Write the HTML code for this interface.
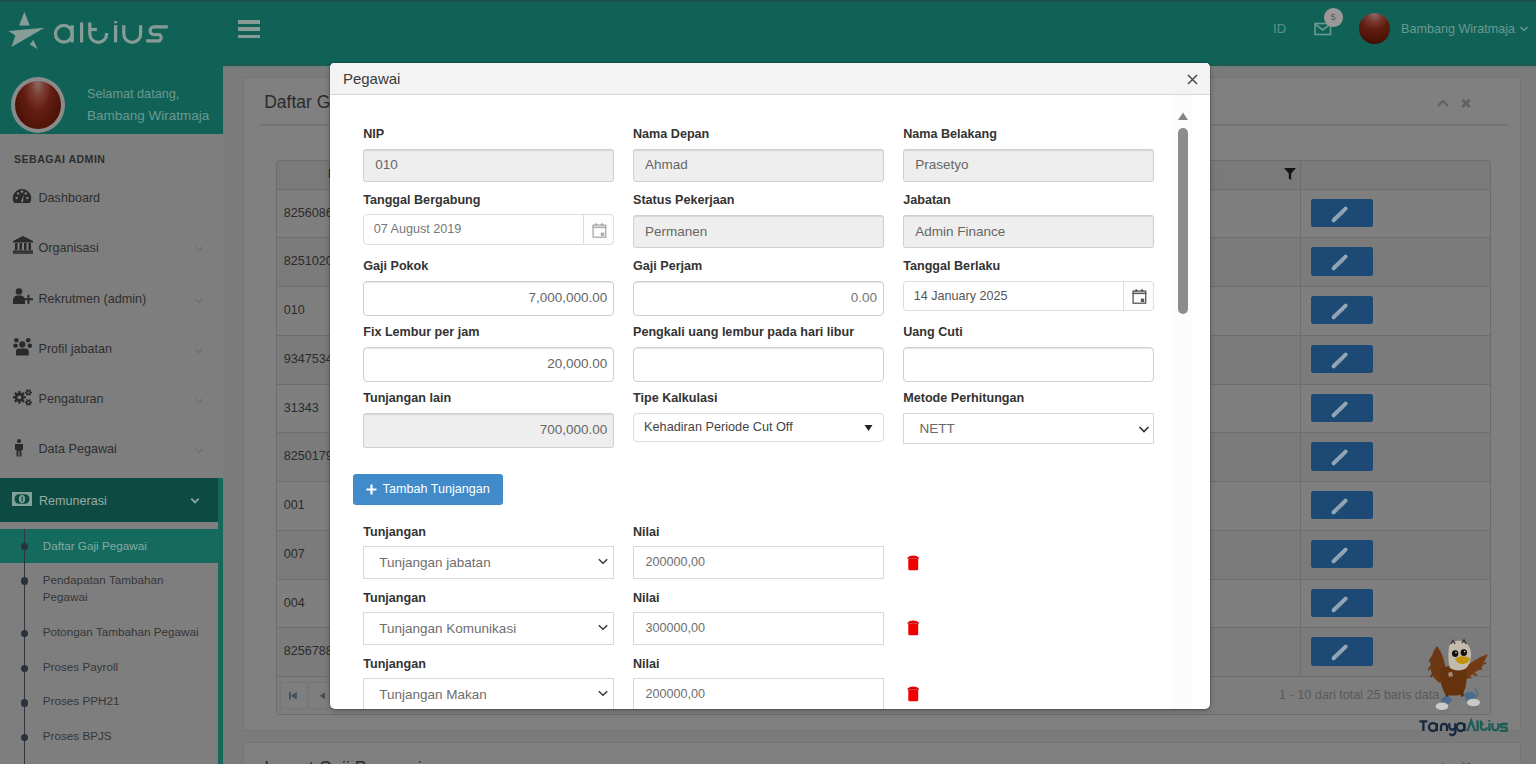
<!DOCTYPE html>
<html><head><meta charset="utf-8"><title>Pegawai</title>
<style>
html,body{margin:0;padding:0;width:1536px;height:764px;overflow:hidden;background:#7b7b7b}
body{position:relative;font-family:"Liberation Sans",sans-serif}
.t{position:absolute;white-space:nowrap;line-height:1}
.r{position:absolute}
#mclip{position:absolute;left:330px;top:62px;width:880px;height:647px;overflow:hidden;border-radius:5px}
</style></head><body>
<div class="r" style="left:0px;top:0px;width:1536px;height:764px;background:#7b7b7b"></div>
<div class="r" style="left:0px;top:0px;width:1536px;height:66px;background:#106256"></div>
<div class="r" style="left:0px;top:0px;width:1536px;height:1.3px;background:#155048"></div>
<div class="r" style="left:0px;top:1.3px;width:1536px;height:1.7px;background:#1b5a52"></div>
<div class="r" style="left:0px;top:66px;width:223px;height:698px;background:#7e7e7e"></div>
<div class="r" style="left:223px;top:64px;width:1313px;height:1.6px;background:#1c5a50"></div>
<div class="r" style="left:223px;top:65.6px;width:1313px;height:2.2px;background:#6c7f7b"></div>
<div class="r" style="left:0px;top:66px;width:223px;height:68px;background:#106256"></div>
<svg class="r" style="left:0;top:0" width="50" height="60" viewBox="0 0 50 60">
<g fill="#879c96">
<polygon points="24.4,11.8 19.1,25.4 29.7,25.4"/>
<polygon points="8.5,31 44.5,27.7 11.5,46.9 15.3,35.5"/>
<polygon points="33.3,40.1 29.7,44.2 37.7,49.2"/>
</g></svg>
<svg class="r" style="left:50px;top:15px" width="125" height="35" viewBox="0 0 125 35">
<g fill="none" stroke="#879c96" stroke-width="3.2" stroke-linecap="butt">
<circle cx="13.8" cy="18.8" r="8.4"/>
<line x1="22.2" y1="10.2" x2="22.2" y2="27.4"/>
<line x1="31.6" y1="7.4" x2="31.6" y2="27.4"/>
<path d="M39.8 7.4 V19 A8.4 8.4 0 0 0 56.6 19 V18"/>
<line x1="39.8" y1="14.5" x2="46.9" y2="14.5"/>
<line x1="65.6" y1="10.2" x2="65.6" y2="27.4"/>
<line x1="65.6" y1="6.2" x2="65.6" y2="8.2"/>
<path d="M73.8 10.2 V19 A8.4 8.4 0 0 0 90.6 19 V10.2"/>
<path d="M117.8 11.8 H104 A3.9 3.9 0 0 0 104 19.6 H109.6 A3.9 3.9 0 0 1 109.6 25.8 H96.2"/>
</g></svg>
<div class="r" style="left:238px;top:20px;width:22px;height:3.6px;background:#879c96"></div>
<div class="r" style="left:238px;top:27.4px;width:22px;height:3.6px;background:#879c96"></div>
<div class="r" style="left:238px;top:34.6px;width:22px;height:3.6px;background:#879c96"></div>
<div class="t" style="left:1273px;top:22.23px;font-size:13.2px;color:#5f9187;">ID</div>
<svg class="r" style="left:1313px;top:21px" width="20" height="16" viewBox="0 0 20 16">
<rect x="2" y="2.5" width="15.5" height="11" fill="none" stroke="#6b9990" stroke-width="1.6"/>
<path d="M2 3 L9.75 9 L17.5 3" fill="none" stroke="#6b9990" stroke-width="1.6"/></svg>
<div class="r" style="left:1324.2px;top:8.4px;width:18.6px;height:18.6px;border-radius:50%;background:#9d9898"></div>
<div class="t" style="left:1330.8px;top:12.95px;font-size:8.8px;color:#505050;">5</div>
<div class="r" style="left:1359px;top:13px;width:31px;height:31px;border-radius:50%;background:radial-gradient(circle at 50% 5%, #8a6a68 0%, #7a3a30 22%, #621c10 45%, #4e1408 75%, #360804 100%)"></div>
<div class="t" style="left:1401px;top:23.03px;font-size:12.6px;color:#6b9990;">Bambang Wiratmaja</div>
<svg class="r" style="left:1519px;top:25px" width="10" height="8" viewBox="0 0 10 8">
<path d="M1.5 2 L5 5.5 L8.5 2" fill="none" stroke="#6b9990" stroke-width="1.4"/></svg>
<div class="r" style="left:10.5px;top:77px;width:54px;height:56px;box-sizing:border-box;border-radius:50%;border:4px solid #8a8a8a;background:radial-gradient(ellipse at 50% 5%, #8a6a68 0%, #7a3a30 22%, #621c10 45%, #4e1408 75%, #360804 100%)"></div>
<div class="t" style="left:87px;top:88.15px;font-size:12.7px;color:#6b9990;">Selamat datang,</div>
<div class="t" style="left:87px;top:109.27px;font-size:13.5px;color:#6b9990;">Bambang Wiratmaja</div>
<div class="t" style="left:14px;top:153.63px;font-size:10.6px;color:#2e2e2e;font-weight:bold;letter-spacing:0.45px;">SEBAGAI ADMIN</div>
<div class="t" style="left:38.5px;top:191.73px;font-size:12.6px;color:#2e2e2e;">Dashboard</div>
<div class="t" style="left:38.5px;top:241.73px;font-size:12.6px;color:#2e2e2e;">Organisasi</div>
<svg class="r" style="left:194px;top:245.4px" width="10" height="8" viewBox="0 0 10 8">
<path d="M1.5 2 L5 5.5 L8.5 2" fill="none" stroke="#6f6f6f" stroke-width="1.3"/></svg>
<div class="t" style="left:38.5px;top:292.93px;font-size:12.6px;color:#2e2e2e;">Rekrutmen (admin)</div>
<svg class="r" style="left:194px;top:296.6px" width="10" height="8" viewBox="0 0 10 8">
<path d="M1.5 2 L5 5.5 L8.5 2" fill="none" stroke="#6f6f6f" stroke-width="1.3"/></svg>
<div class="t" style="left:38.5px;top:343.13px;font-size:12.6px;color:#2e2e2e;">Profil jabatan</div>
<svg class="r" style="left:194px;top:346.8px" width="10" height="8" viewBox="0 0 10 8">
<path d="M1.5 2 L5 5.5 L8.5 2" fill="none" stroke="#6f6f6f" stroke-width="1.3"/></svg>
<div class="t" style="left:38.5px;top:393.13px;font-size:12.6px;color:#2e2e2e;">Pengaturan</div>
<svg class="r" style="left:194px;top:396.8px" width="10" height="8" viewBox="0 0 10 8">
<path d="M1.5 2 L5 5.5 L8.5 2" fill="none" stroke="#6f6f6f" stroke-width="1.3"/></svg>
<div class="t" style="left:38.5px;top:443.33px;font-size:12.6px;color:#2e2e2e;">Data Pegawai</div>
<svg class="r" style="left:194px;top:447px" width="10" height="8" viewBox="0 0 10 8">
<path d="M1.5 2 L5 5.5 L8.5 2" fill="none" stroke="#6f6f6f" stroke-width="1.3"/></svg>
<svg class="r" style="left:12px;top:188px" width="20" height="16" viewBox="0 0 20 16">
<path d="M2.2 15 A9.2 9.2 0 1 1 17.8 15 Z" fill="#2a2a2a"/>
<g fill="#7e7e7e"><circle cx="4.6" cy="10" r="1.3"/><circle cx="6.2" cy="5.5" r="1.3"/><circle cx="10" cy="3.6" r="1.3"/><circle cx="13.8" cy="5.5" r="1.3"/><circle cx="15.4" cy="10" r="1.3"/>
<path d="M8.8 14 L11.6 6.5 L11.2 14 Z"/></g></svg>
<svg class="r" style="left:13px;top:236px" width="20" height="18" viewBox="0 0 20 18">
<g fill="#2a2a2a"><path d="M0 5 L10 0 L20 5 Z"/><rect x="0" y="5" width="20" height="1.5"/>
<rect x="2" y="7" width="2.5" height="7"/><rect x="6.5" y="7" width="2.5" height="7"/><rect x="11" y="7" width="2.5" height="7"/><rect x="15.5" y="7" width="2.5" height="7"/>
<rect x="0" y="14.5" width="20" height="1.6"/><rect x="0" y="16.3" width="20" height="1.5"/></g></svg>
<svg class="r" style="left:13px;top:288px" width="20" height="17" viewBox="0 0 20 17">
<g fill="#2a2a2a"><circle cx="6" cy="3.5" r="3.3"/><path d="M0 16 V12 A5 5 0 0 1 5 7.5 H7 A5 5 0 0 1 12 12 V16 Z"/>
<rect x="11" y="10.2" width="9" height="2"/><rect x="14.5" y="6.8" width="2" height="9"/></g></svg>
<svg class="r" style="left:8px;top:332px" width="30" height="30" viewBox="0 0 30 30">
<g fill="#2a2a2a"><circle cx="8.4" cy="8.2" r="2.3"/><circle cx="20.2" cy="8.2" r="2.3"/><circle cx="14.3" cy="12.4" r="3.1"/>
<circle cx="7.5" cy="13.7" r="2.3"/><circle cx="21.8" cy="13.7" r="2.3"/>
<path d="M8 23.6 V19.5 Q8 16.6 11 16.6 H17.6 Q20.8 16.6 20.8 19.5 V23.6 Z"/></g></svg>
<svg class="r" style="left:8px;top:382px" width="30" height="30" viewBox="0 0 30 30">
<g fill="#2a2a2a"><circle cx="11.4" cy="15.3" r="4.6"/><polygon points="15.50,14.15 17.80,14.15 17.80,16.45 15.50,16.45"/><polygon points="15.11,17.39 16.74,19.01 15.11,20.64 13.49,19.01"/><polygon points="12.55,19.40 12.55,21.70 10.25,21.70 10.25,19.40"/><polygon points="9.31,19.01 7.69,20.64 6.06,19.01 7.69,17.39"/><polygon points="7.30,16.45 5.00,16.45 5.00,14.15 7.30,14.15"/><polygon points="7.69,13.21 6.06,11.59 7.69,9.96 9.31,11.59"/><polygon points="10.25,11.20 10.25,8.90 12.55,8.90 12.55,11.20"/><polygon points="13.49,11.59 15.11,9.96 16.74,11.59 15.11,13.21"/><circle cx="11.4" cy="15.3" r="1.9" fill="#7e7e7e"/><circle cx="20.4" cy="10.4" r="2.5"/><polygon points="22.40,9.65 23.90,9.65 23.90,11.15 22.40,11.15"/><polygon points="22.05,11.76 22.80,13.06 21.50,13.81 20.75,12.51"/><polygon points="20.05,12.51 19.30,13.81 18.00,13.06 18.75,11.76"/><polygon points="18.40,11.15 16.90,11.15 16.90,9.65 18.40,9.65"/><polygon points="18.75,9.04 18.00,7.74 19.30,6.99 20.05,8.29"/><polygon points="20.75,8.29 21.50,6.99 22.80,7.74 22.05,9.04"/><circle cx="20.4" cy="10.4" r="1.0" fill="#7e7e7e"/><circle cx="20.4" cy="20.4" r="2.5"/><polygon points="22.40,19.65 23.90,19.65 23.90,21.15 22.40,21.15"/><polygon points="22.05,21.76 22.80,23.06 21.50,23.81 20.75,22.51"/><polygon points="20.05,22.51 19.30,23.81 18.00,23.06 18.75,21.76"/><polygon points="18.40,21.15 16.90,21.15 16.90,19.65 18.40,19.65"/><polygon points="18.75,19.04 18.00,17.74 19.30,16.99 20.05,18.29"/><polygon points="20.75,18.29 21.50,16.99 22.80,17.74 22.05,19.04"/><circle cx="20.4" cy="20.4" r="1.0" fill="#7e7e7e"/></g></svg>
<svg class="r" style="left:14px;top:439px" width="10" height="18" viewBox="0 0 10 18">
<g fill="#2a2a2a"><circle cx="5" cy="2" r="2"/><path d="M1 5 H9 V11 H7.5 V17.5 H5.5 V12 H4.5 V17.5 H2.5 V11 H1 Z"/></g></svg>
<div class="r" style="left:0px;top:478px;width:218px;height:44px;background:#0d4a41"></div>
<div class="r" style="left:218px;top:478px;width:5px;height:286px;background:#15695a"></div>
<div class="r" style="left:0px;top:529px;width:218px;height:33.5px;background:#136a5d"></div>
<svg class="r" style="left:12.4px;top:492px" width="20" height="14" viewBox="0 0 20 14">
<rect x="0" y="0" width="20" height="14" fill="#7fa39b"/>
<rect x="2.6" y="2.2" width="14.8" height="9.6" rx="4.2" fill="#0d4a41"/>
<ellipse cx="10" cy="7" rx="3.1" ry="4" fill="#7fa39b"/>
<rect x="9.5" y="4.6" width="1.3" height="4.8" fill="#0d4a41"/></svg>
<div class="t" style="left:38.9px;top:494.73px;font-size:12.6px;color:#9aaaa6;">Remunerasi</div>
<svg class="r" style="left:190px;top:497px" width="10" height="8" viewBox="0 0 10 8">
<path d="M1.3 1.6 L5 5.3 L8.7 1.6" fill="none" stroke="#86a29c" stroke-width="1.9"/></svg>
<div class="r" style="left:24px;top:529px;width:1.3px;height:235px;background:#2f3640"></div>
<div class="t" style="left:42.8px;top:539.60px;font-size:11.7px;color:#87aba2;">Daftar Gaji Pegawai</div>
<div class="r" style="left:21.049999999999997px;top:543.0px;width:7.2px;height:7.2px;border-radius:50%;background:#2a313a"></div>
<div class="t" style="left:42.8px;top:574.10px;font-size:11.7px;color:#363636;">Pendapatan Tambahan</div>
<div class="r" style="left:21.049999999999997px;top:577.4px;width:7.2px;height:7.2px;border-radius:50%;background:#2a313a"></div>
<div class="t" style="left:42.8px;top:590.70px;font-size:11.7px;color:#363636;">Pegawai</div>
<div class="t" style="left:42.8px;top:626.30px;font-size:11.7px;color:#363636;">Potongan Tambahan Pegawai</div>
<div class="r" style="left:21.049999999999997px;top:629.6px;width:7.2px;height:7.2px;border-radius:50%;background:#2a313a"></div>
<div class="t" style="left:42.8px;top:660.60px;font-size:11.7px;color:#363636;">Proses Payroll</div>
<div class="r" style="left:21.049999999999997px;top:664.9px;width:7.2px;height:7.2px;border-radius:50%;background:#2a313a"></div>
<div class="t" style="left:42.8px;top:695.20px;font-size:11.7px;color:#363636;">Proses PPH21</div>
<div class="r" style="left:21.049999999999997px;top:699.4px;width:7.2px;height:7.2px;border-radius:50%;background:#2a313a"></div>
<div class="t" style="left:42.8px;top:730.10px;font-size:11.7px;color:#363636;">Proses BPJS</div>
<div class="r" style="left:21.049999999999997px;top:734.1999999999999px;width:7.2px;height:7.2px;border-radius:50%;background:#2a313a"></div>
<div class="r" style="left:243px;top:77.4px;width:1278px;height:654px;background:#808080;border:1px solid #747577;box-sizing:border-box"></div>
<div class="t" style="left:264.2px;top:94.39px;font-size:17.5px;color:#2b2b2b;">Daftar Gaji Pegawai</div>
<div class="r" style="left:259px;top:123.5px;width:1250px;height:2px;background:#747577"></div>
<svg class="r" style="left:1436px;top:98px" width="14" height="10" viewBox="0 0 14 10">
<path d="M2 7.8 L7 3 L12 7.8" fill="none" stroke="#626262" stroke-width="2.3"/></svg>
<svg class="r" style="left:1459.5px;top:96.5px" width="12" height="12" viewBox="0 0 12 12">
<path d="M2.4 2.8 L9.6 10 M9.6 2.8 L2.4 10" fill="none" stroke="#626262" stroke-width="2.7"/></svg>
<div class="r" style="left:275.5px;top:160px;width:1215.0px;height:555px;background:#7d7d7d;border:1px solid #6d6d6d;box-sizing:border-box;border-radius:3px"></div>
<div class="r" style="left:276.5px;top:161px;width:1213.0px;height:28px;background:#7a7a7a"></div>
<svg class="r" style="left:1283px;top:167px" width="14" height="14" viewBox="0 0 14 14">
<path d="M1 1 H13 L8.2 6.5 V13 L5.8 11.5 V6.5 Z" fill="#151515"/></svg>
<div class="t" style="left:328.3px;top:167.93px;font-size:12.6px;color:#151515;font-weight:bold;">NIP</div>
<div class="r" style="left:276.5px;top:188.7px;width:1213.0px;height:1px;background:#6e6e6e"></div>
<div class="r" style="left:276.5px;top:189.7px;width:1213.0px;height:47.75px;background:#7f7f7f"></div>
<div class="t" style="left:283.7px;top:206.63px;font-size:12.6px;color:#2b2b2b;">82560866</div>
<div class="r" style="left:1310.6px;top:198.6px;width:62.8px;height:28.3px;background:#1d4a74;border-radius:2.5px"></div>
<svg class="r" style="left:1330px;top:205.7px" width="20" height="18" viewBox="0 0 20 18">
<path d="M3.6 14.3 L13 5.2" stroke="#95a6b6" stroke-width="4" stroke-linecap="round"/>
<path d="M14.3 3.9 L15.6 2.6" stroke="#95a6b6" stroke-width="4" stroke-linecap="round"/>
<path d="M5.8 13.2 L12.4 6.8" stroke="#7d90a4" stroke-width="0.9"/></svg>
<div class="r" style="left:276.5px;top:237.45px;width:1213.0px;height:1px;background:#6e6e6e"></div>
<div class="r" style="left:276.5px;top:238.45px;width:1213.0px;height:47.75px;background:#7b7b7b"></div>
<div class="t" style="left:283.7px;top:255.38px;font-size:12.6px;color:#2b2b2b;">82510200</div>
<div class="r" style="left:1310.6px;top:247.35px;width:62.8px;height:28.3px;background:#1d4a74;border-radius:2.5px"></div>
<svg class="r" style="left:1330px;top:254.45px" width="20" height="18" viewBox="0 0 20 18">
<path d="M3.6 14.3 L13 5.2" stroke="#95a6b6" stroke-width="4" stroke-linecap="round"/>
<path d="M14.3 3.9 L15.6 2.6" stroke="#95a6b6" stroke-width="4" stroke-linecap="round"/>
<path d="M5.8 13.2 L12.4 6.8" stroke="#7d90a4" stroke-width="0.9"/></svg>
<div class="r" style="left:276.5px;top:286.2px;width:1213.0px;height:1px;background:#6e6e6e"></div>
<div class="r" style="left:276.5px;top:287.2px;width:1213.0px;height:47.75px;background:#7f7f7f"></div>
<div class="t" style="left:283.7px;top:304.13px;font-size:12.6px;color:#2b2b2b;">010</div>
<div class="r" style="left:1310.6px;top:296.09999999999997px;width:62.8px;height:28.3px;background:#1d4a74;border-radius:2.5px"></div>
<svg class="r" style="left:1330px;top:303.2px" width="20" height="18" viewBox="0 0 20 18">
<path d="M3.6 14.3 L13 5.2" stroke="#95a6b6" stroke-width="4" stroke-linecap="round"/>
<path d="M14.3 3.9 L15.6 2.6" stroke="#95a6b6" stroke-width="4" stroke-linecap="round"/>
<path d="M5.8 13.2 L12.4 6.8" stroke="#7d90a4" stroke-width="0.9"/></svg>
<div class="r" style="left:276.5px;top:334.95px;width:1213.0px;height:1px;background:#6e6e6e"></div>
<div class="r" style="left:276.5px;top:335.95px;width:1213.0px;height:47.75px;background:#7b7b7b"></div>
<div class="t" style="left:283.7px;top:352.88px;font-size:12.6px;color:#2b2b2b;">9347534</div>
<div class="r" style="left:1310.6px;top:344.84999999999997px;width:62.8px;height:28.3px;background:#1d4a74;border-radius:2.5px"></div>
<svg class="r" style="left:1330px;top:351.95px" width="20" height="18" viewBox="0 0 20 18">
<path d="M3.6 14.3 L13 5.2" stroke="#95a6b6" stroke-width="4" stroke-linecap="round"/>
<path d="M14.3 3.9 L15.6 2.6" stroke="#95a6b6" stroke-width="4" stroke-linecap="round"/>
<path d="M5.8 13.2 L12.4 6.8" stroke="#7d90a4" stroke-width="0.9"/></svg>
<div class="r" style="left:276.5px;top:383.7px;width:1213.0px;height:1px;background:#6e6e6e"></div>
<div class="r" style="left:276.5px;top:384.7px;width:1213.0px;height:47.75px;background:#7f7f7f"></div>
<div class="t" style="left:283.7px;top:401.63px;font-size:12.6px;color:#2b2b2b;">31343</div>
<div class="r" style="left:1310.6px;top:393.59999999999997px;width:62.8px;height:28.3px;background:#1d4a74;border-radius:2.5px"></div>
<svg class="r" style="left:1330px;top:400.7px" width="20" height="18" viewBox="0 0 20 18">
<path d="M3.6 14.3 L13 5.2" stroke="#95a6b6" stroke-width="4" stroke-linecap="round"/>
<path d="M14.3 3.9 L15.6 2.6" stroke="#95a6b6" stroke-width="4" stroke-linecap="round"/>
<path d="M5.8 13.2 L12.4 6.8" stroke="#7d90a4" stroke-width="0.9"/></svg>
<div class="r" style="left:276.5px;top:432.45px;width:1213.0px;height:1px;background:#6e6e6e"></div>
<div class="r" style="left:276.5px;top:433.45px;width:1213.0px;height:47.75px;background:#7b7b7b"></div>
<div class="t" style="left:283.7px;top:450.38px;font-size:12.6px;color:#2b2b2b;">8250179</div>
<div class="r" style="left:1310.6px;top:442.34999999999997px;width:62.8px;height:28.3px;background:#1d4a74;border-radius:2.5px"></div>
<svg class="r" style="left:1330px;top:449.45px" width="20" height="18" viewBox="0 0 20 18">
<path d="M3.6 14.3 L13 5.2" stroke="#95a6b6" stroke-width="4" stroke-linecap="round"/>
<path d="M14.3 3.9 L15.6 2.6" stroke="#95a6b6" stroke-width="4" stroke-linecap="round"/>
<path d="M5.8 13.2 L12.4 6.8" stroke="#7d90a4" stroke-width="0.9"/></svg>
<div class="r" style="left:276.5px;top:481.2px;width:1213.0px;height:1px;background:#6e6e6e"></div>
<div class="r" style="left:276.5px;top:482.2px;width:1213.0px;height:47.75px;background:#7f7f7f"></div>
<div class="t" style="left:283.7px;top:499.13px;font-size:12.6px;color:#2b2b2b;">001</div>
<div class="r" style="left:1310.6px;top:491.09999999999997px;width:62.8px;height:28.3px;background:#1d4a74;border-radius:2.5px"></div>
<svg class="r" style="left:1330px;top:498.2px" width="20" height="18" viewBox="0 0 20 18">
<path d="M3.6 14.3 L13 5.2" stroke="#95a6b6" stroke-width="4" stroke-linecap="round"/>
<path d="M14.3 3.9 L15.6 2.6" stroke="#95a6b6" stroke-width="4" stroke-linecap="round"/>
<path d="M5.8 13.2 L12.4 6.8" stroke="#7d90a4" stroke-width="0.9"/></svg>
<div class="r" style="left:276.5px;top:529.95px;width:1213.0px;height:1px;background:#6e6e6e"></div>
<div class="r" style="left:276.5px;top:530.95px;width:1213.0px;height:47.75px;background:#7b7b7b"></div>
<div class="t" style="left:283.7px;top:547.88px;font-size:12.6px;color:#2b2b2b;">007</div>
<div class="r" style="left:1310.6px;top:539.85px;width:62.8px;height:28.3px;background:#1d4a74;border-radius:2.5px"></div>
<svg class="r" style="left:1330px;top:546.95px" width="20" height="18" viewBox="0 0 20 18">
<path d="M3.6 14.3 L13 5.2" stroke="#95a6b6" stroke-width="4" stroke-linecap="round"/>
<path d="M14.3 3.9 L15.6 2.6" stroke="#95a6b6" stroke-width="4" stroke-linecap="round"/>
<path d="M5.8 13.2 L12.4 6.8" stroke="#7d90a4" stroke-width="0.9"/></svg>
<div class="r" style="left:276.5px;top:578.7px;width:1213.0px;height:1px;background:#6e6e6e"></div>
<div class="r" style="left:276.5px;top:579.7px;width:1213.0px;height:47.75px;background:#7f7f7f"></div>
<div class="t" style="left:283.7px;top:596.63px;font-size:12.6px;color:#2b2b2b;">004</div>
<div class="r" style="left:1310.6px;top:588.6px;width:62.8px;height:28.3px;background:#1d4a74;border-radius:2.5px"></div>
<svg class="r" style="left:1330px;top:595.7px" width="20" height="18" viewBox="0 0 20 18">
<path d="M3.6 14.3 L13 5.2" stroke="#95a6b6" stroke-width="4" stroke-linecap="round"/>
<path d="M14.3 3.9 L15.6 2.6" stroke="#95a6b6" stroke-width="4" stroke-linecap="round"/>
<path d="M5.8 13.2 L12.4 6.8" stroke="#7d90a4" stroke-width="0.9"/></svg>
<div class="r" style="left:276.5px;top:627.45px;width:1213.0px;height:1px;background:#6e6e6e"></div>
<div class="r" style="left:276.5px;top:628.45px;width:1213.0px;height:47.75px;background:#7b7b7b"></div>
<div class="t" style="left:283.7px;top:645.38px;font-size:12.6px;color:#2b2b2b;">8256788</div>
<div class="r" style="left:1310.6px;top:637.35px;width:62.8px;height:28.3px;background:#1d4a74;border-radius:2.5px"></div>
<svg class="r" style="left:1330px;top:644.45px" width="20" height="18" viewBox="0 0 20 18">
<path d="M3.6 14.3 L13 5.2" stroke="#95a6b6" stroke-width="4" stroke-linecap="round"/>
<path d="M14.3 3.9 L15.6 2.6" stroke="#95a6b6" stroke-width="4" stroke-linecap="round"/>
<path d="M5.8 13.2 L12.4 6.8" stroke="#7d90a4" stroke-width="0.9"/></svg>
<div class="r" style="left:276.5px;top:676.2px;width:1213.0px;height:1px;background:#6e6e6e"></div>
<div class="r" style="left:1299.5px;top:161px;width:1px;height:515.2px;background:#6e6e6e"></div>
<div class="r" style="left:279.5px;top:682px;width:28.3px;height:26.5px;border:1px solid #767676;box-sizing:border-box;background:#7e7e7e;border-radius:2px"></div>
<div class="r" style="left:308.7px;top:682px;width:28.3px;height:26.5px;border:1px solid #767676;box-sizing:border-box;background:#7e7e7e;border-radius:2px"></div>
<svg class="r" style="left:288px;top:691px" width="10" height="10" viewBox="0 0 10 10">
<rect x="1" y="1" width="1.8" height="7.6" fill="#44505c"/><path d="M8.8 1 V8.6 L2.6 4.8 Z" fill="#44505c"/></svg>
<svg class="r" style="left:318px;top:691px" width="9" height="10" viewBox="0 0 9 10">
<path d="M7 1.4 V8.2 L1.6 4.8 Z" fill="#44505c"/></svg>
<div class="t" style="right:96.70000000000005px;top:688.63px;font-size:12.6px;color:#5a5a5a;">1 - 10 dari total 25 baris data</div>
<div class="r" style="left:243px;top:742.4px;width:1278px;height:30px;background:#808080;border:1px solid #747577;box-sizing:border-box"></div>
<div class="t" style="left:264.2px;top:760.19px;font-size:17.5px;color:#2b2b2b;">Import Gaji Pegawai</div>
<svg class="r" style="left:1436px;top:761px" width="14" height="10" viewBox="0 0 14 10">
<path d="M2 7.8 L7 3 L12 7.8" fill="none" stroke="#626262" stroke-width="2.3"/></svg>
<svg class="r" style="left:1459.5px;top:759.5px" width="12" height="12" viewBox="0 0 12 12">
<path d="M2.4 2.8 L9.6 10 M9.6 2.8 L2.4 10" fill="none" stroke="#626262" stroke-width="2.7"/></svg>
<svg class="r" style="left:1415px;top:635px" width="85" height="85" viewBox="0 0 85 85">
<ellipse cx="29" cy="77" rx="6" ry="2.5" fill="#787878"/><ellipse cx="58" cy="73" rx="6" ry="2.5" fill="#787878"/>
<path d="M22 11 C18 16 15 24 15.5 32 C16 40 20 45 25 48 L31 36 C30 27 27 17 22 11 Z" fill="#6c3713"/>
<path d="M17 22 L14.5 27 M16 31 L13.5 35 M18 39 L15.5 42" stroke="#6c3713" stroke-width="2"/>
<path d="M49 33 C56 27 64 22 73 19 C71 23 70 26 67 29 L68 31 C64 34 60 38 55 41 L57 43 C53 44 50 44 48 43 Z" fill="#733a15"/>
<path d="M67 29 L71 28 M63 34 L67 34 M58 39 L62 40" stroke="#733a15" stroke-width="2"/>
<path d="M25 34 C32 30 45 30 51 33 C53 43 51 52 48 59 C42 61 35 61 30 59 C26 51 24 42 25 34 Z" fill="#66330f"/>
<path d="M33 38 L37 36.5 L38 41 L34 42 Z" fill="#a08a78"/>
<path d="M34 12 C35 7 41 5 46 6 C52 7 56 12 56 19 C56 26 54 31 50 34 C46 36 39 36 35 33 C33 27 33 18 34 12 Z" fill="#c2bbac"/>
<path d="M36 9 L38 5.5 L40 9 M47 8 L49 5 L51 9" stroke="#3a3a3a" stroke-width="1.4" fill="none"/>
<ellipse cx="40.2" cy="18.6" rx="3.2" ry="3.4" fill="#0c0c0c"/><ellipse cx="48.8" cy="17.6" rx="3.2" ry="3.4" fill="#0c0c0c"/>
<circle cx="41" cy="17.6" r="0.8" fill="#d8d8d8"/><circle cx="49.6" cy="16.6" r="0.8" fill="#d8d8d8"/>
<path d="M40 24 C43 20.5 52 20.5 55 23.5 C54.5 27.5 50 29.5 46 29 C43 28.5 41 26.5 40 24 Z" fill="#c3930c"/>
<path d="M31 58 L34 58 L33 64 L30 64 Z M45 57 L48 57 L49 61 L46 62 Z" fill="#5a2d0e"/>
<path d="M26 64 C29 60 36 61 37 65 C36 69 30 71 26 69 Z" fill="#4c6c8e"/>
<ellipse cx="27" cy="71.2" rx="6.3" ry="3.8" fill="#c9c9c9"/>
<path d="M49 60 C52 55 60 56 61 61 C61 65 56 67 51 66 Z" fill="#4c6c8e"/>
<ellipse cx="58.5" cy="67.5" rx="6.5" ry="3.8" fill="#c9c9c9"/>
<path d="M59.5 54 C62.5 55 63.5 59 61.5 62" stroke="#4c6c8e" stroke-width="1.5" fill="none"/>
</svg>
<svg class="r" style="left:1415px;top:715px" width="97" height="25" viewBox="0 0 97 25">
<g fill="none" stroke-width="2.3" stroke-linecap="butt">
<g stroke="#17293f">
<path d="M4.4 6.3 H12.4 M8.4 6.3 V16.1"/>
<circle cx="17.9" cy="12.1" r="3.9"/><path d="M21.8 8.2 V16.1"/>
<path d="M26 16.1 V11.8 A3 3 0 0 1 32 11.8 V16.1"/>
<path d="M34.3 8.2 V11.6 A3 3 0 0 0 40.3 11.6 V8.2 M40.3 11.6 V16.8 A3.1 3.1 0 0 1 34.6 18.6"/>
<circle cx="45.6" cy="12.1" r="3.9"/><path d="M49.5 8.2 V16.1"/>
</g>
<g stroke="#1b5d54">
<path d="M52.4 16.1 L56.2 5.8 L60 16.1"/>
<path d="M62.6 5.4 V16.1"/>
<path d="M65.9 5.4 V12.4 A3.1 3.1 0 0 0 72 12.4 M65.9 9 H68.4"/>
<path d="M74.4 8.2 V16.1 M74.4 5.3 V6.8"/>
<path d="M77.4 8.2 V12.2 A3 3 0 0 0 83.4 12.2 V8.2"/>
<path d="M92.8 9 H87.6 A1.7 1.7 0 0 0 87.6 12.4 H90.2 A1.7 1.7 0 0 1 90.2 15.9 H84.8"/>
</g></g></svg>
<div class="r" style="left:330px;top:62.5px;width:880px;height:646.5px;background:#fff;border-radius:5px;box-shadow:0 0 0 0.7px rgba(0,0,0,.22),0 2px 6px rgba(0,0,0,.25)"></div>
<div class="r" style="left:0;top:0;width:1536px;height:764px;clip-path:inset(62.5px 326px 55px 330px round 5px)">
<div class="r" style="left:330px;top:62.5px;width:880px;height:31px;background:#f3f3f3;border-bottom:1px solid #d6d6d6"></div>
<div class="t" style="left:342.9px;top:70.80px;font-size:15px;color:#3a3a3a;">Pegawai</div>
<svg class="r" style="left:1187px;top:74px" width="11" height="11" viewBox="0 0 11 11">
<path d="M1 1 L10 10 M10 1 L1 10" fill="none" stroke="#4a4a4a" stroke-width="1.5"/></svg>
<div class="r" style="left:1172.5px;top:95px;width:19.5px;height:614px;background:#fcfcfc"></div>
<svg class="r" style="left:1177px;top:111px" width="12" height="10" viewBox="0 0 12 10">
<path d="M1 9 L6 1.5 L11 9 Z" fill="#858585"/></svg>
<div class="r" style="left:1178px;top:128.3px;width:10.4px;height:186px;background:#8c8c8c;border-radius:5.2px"></div>
<div class="t" style="left:363.2px;top:128.03px;font-size:12.6px;color:#333;font-weight:bold;">NIP</div>
<div class="t" style="left:633px;top:128.03px;font-size:12.6px;color:#333;font-weight:bold;">Nama Depan</div>
<div class="t" style="left:903.2px;top:128.03px;font-size:12.6px;color:#333;font-weight:bold;">Nama Belakang</div>
<div class="r" style="left:363.2px;top:148.9px;width:250.5px;height:33.2px;background:#eeeeee;border:1px solid #cfcfcf;box-sizing:border-box;border-radius:2.5px;box-shadow:inset 0 1px 1px rgba(0,0,0,.1);"></div>
<div class="t" style="left:375.2px;top:158.27px;font-size:13.5px;color:#666;">010</div>
<div class="r" style="left:633px;top:148.9px;width:250.5px;height:33.2px;background:#eeeeee;border:1px solid #cfcfcf;box-sizing:border-box;border-radius:2.5px;box-shadow:inset 0 1px 1px rgba(0,0,0,.1);"></div>
<div class="t" style="left:645px;top:158.27px;font-size:13.5px;color:#666;">Ahmad</div>
<div class="r" style="left:903.2px;top:148.9px;width:250.5px;height:33.2px;background:#eeeeee;border:1px solid #cfcfcf;box-sizing:border-box;border-radius:2.5px;box-shadow:inset 0 1px 1px rgba(0,0,0,.1);"></div>
<div class="t" style="left:915.2px;top:158.27px;font-size:13.5px;color:#666;">Prasetyo</div>
<div class="t" style="left:363.2px;top:194.43px;font-size:12.6px;color:#333;font-weight:bold;">Tanggal Bergabung</div>
<div class="t" style="left:633px;top:194.43px;font-size:12.6px;color:#333;font-weight:bold;">Status Pekerjaan</div>
<div class="t" style="left:903.2px;top:194.43px;font-size:12.6px;color:#333;font-weight:bold;">Jabatan</div>
<div class="r" style="left:363.2px;top:214.4px;width:250.5px;height:30.9px;background:#fff;border:1px solid #dedede;box-sizing:border-box;border-radius:4px"></div>
<div class="r" style="left:582.7px;top:214.4px;width:31px;height:30.9px;background:#fdfdfd;border:1px solid #dedede;box-sizing:border-box;border-radius:0 4px 4px 0"></div>
<div class="t" style="left:373.7px;top:223.33px;font-size:12.6px;color:#777;">07 August 2019</div>
<svg class="r" style="left:590.7px;top:221.85px" width="16" height="16" viewBox="0 0 16 16">
<rect x="2.1" y="3.1" width="12.6" height="12.1" fill="none" stroke="#aaa" stroke-width="1.3"/>
<rect x="1.5" y="4.6" width="13.8" height="1.5" fill="#aaa"/>
<circle cx="5.3" cy="2.6" r="1.25" fill="#aaa"/><circle cx="11" cy="2.6" r="1.25" fill="#aaa"/>
<rect x="9.8" y="10.6" width="3.4" height="3.4" fill="#aaa"/></svg>
<div class="r" style="left:633px;top:214.6px;width:250.5px;height:33.2px;background:#eeeeee;border:1px solid #cfcfcf;box-sizing:border-box;border-radius:2.5px;box-shadow:inset 0 1px 1px rgba(0,0,0,.1);"></div>
<div class="t" style="left:645px;top:224.57px;font-size:13.5px;color:#666;">Permanen</div>
<div class="r" style="left:903.2px;top:214.6px;width:250.5px;height:33.2px;background:#eeeeee;border:1px solid #cfcfcf;box-sizing:border-box;border-radius:2.5px;box-shadow:inset 0 1px 1px rgba(0,0,0,.1);"></div>
<div class="t" style="left:915.2px;top:224.57px;font-size:13.5px;color:#666;">Admin Finance</div>
<div class="t" style="left:363.2px;top:260.13px;font-size:12.6px;color:#333;font-weight:bold;">Gaji Pokok</div>
<div class="t" style="left:633px;top:260.13px;font-size:12.6px;color:#333;font-weight:bold;">Gaji Perjam</div>
<div class="t" style="left:903.2px;top:260.13px;font-size:12.6px;color:#333;font-weight:bold;">Tanggal Berlaku</div>
<div class="r" style="left:363.2px;top:281px;width:250.5px;height:35.2px;background:#fff;border:1px solid #cfcfcf;box-sizing:border-box;border-radius:4px;box-shadow:inset 0 1px 1px rgba(0,0,0,.1);"></div>
<div class="t" style="right:928.8px;top:291.17px;font-size:13.5px;color:#666;">7,000,000.00</div>
<div class="r" style="left:633px;top:281px;width:250.5px;height:35.2px;background:#fff;border:1px solid #cfcfcf;box-sizing:border-box;border-radius:4px;box-shadow:inset 0 1px 1px rgba(0,0,0,.1);"></div>
<div class="t" style="right:659.0px;top:291.17px;font-size:13.5px;color:#777;">0.00</div>
<div class="r" style="left:903.2px;top:281.4px;width:250.5px;height:29.6px;background:#fff;border:1px solid #dedede;box-sizing:border-box;border-radius:4px"></div>
<div class="r" style="left:1122.7px;top:281.4px;width:31px;height:29.6px;background:#fdfdfd;border:1px solid #dedede;box-sizing:border-box;border-radius:0 4px 4px 0"></div>
<div class="t" style="left:913.7px;top:289.83px;font-size:12.6px;color:#555;">14 January 2025</div>
<svg class="r" style="left:1130.7px;top:288.2px" width="16" height="16" viewBox="0 0 16 16">
<rect x="2.1" y="3.1" width="12.6" height="12.1" fill="none" stroke="#555" stroke-width="1.3"/>
<rect x="1.5" y="4.6" width="13.8" height="1.5" fill="#555"/>
<circle cx="5.3" cy="2.6" r="1.25" fill="#555"/><circle cx="11" cy="2.6" r="1.25" fill="#555"/>
<rect x="9.8" y="10.6" width="3.4" height="3.4" fill="#555"/></svg>
<div class="t" style="left:363.2px;top:326.03px;font-size:12.6px;color:#333;font-weight:bold;">Fix Lembur per jam</div>
<div class="t" style="left:633px;top:326.03px;font-size:12.6px;color:#333;font-weight:bold;">Pengkali uang lembur pada hari libur</div>
<div class="t" style="left:903.2px;top:326.03px;font-size:12.6px;color:#333;font-weight:bold;">Uang Cuti</div>
<div class="r" style="left:363.2px;top:347.2px;width:250.5px;height:34.4px;background:#fff;border:1px solid #cfcfcf;box-sizing:border-box;border-radius:4px;box-shadow:inset 0 1px 1px rgba(0,0,0,.1);"></div>
<div class="t" style="right:928.8px;top:356.87px;font-size:13.5px;color:#666;">20,000.00</div>
<div class="r" style="left:633px;top:347.2px;width:250.5px;height:34.4px;background:#fff;border:1px solid #cfcfcf;box-sizing:border-box;border-radius:4px;box-shadow:inset 0 1px 1px rgba(0,0,0,.1);"></div>
<div class="r" style="left:903.2px;top:347.2px;width:250.5px;height:34.4px;background:#fff;border:1px solid #cfcfcf;box-sizing:border-box;border-radius:4px;box-shadow:inset 0 1px 1px rgba(0,0,0,.1);"></div>
<div class="t" style="left:363.2px;top:391.53px;font-size:12.6px;color:#333;font-weight:bold;">Tunjangan lain</div>
<div class="t" style="left:633px;top:391.53px;font-size:12.6px;color:#333;font-weight:bold;">Tipe Kalkulasi</div>
<div class="t" style="left:903.2px;top:391.53px;font-size:12.6px;color:#333;font-weight:bold;">Metode Perhitungan</div>
<div class="r" style="left:363.2px;top:412.5px;width:250.5px;height:35.3px;background:#eeeeee;border:1px solid #cfcfcf;box-sizing:border-box;border-radius:2.5px;box-shadow:inset 0 1px 1px rgba(0,0,0,.1);"></div>
<div class="t" style="right:928.8px;top:422.87px;font-size:13.5px;color:#666;">700,000.00</div>
<div class="r" style="left:633px;top:413.3px;width:250.5px;height:28.9px;background:#fff;border:1px solid #dcdcdc;box-sizing:border-box;border-radius:4px"></div>
<div class="t" style="left:644.1px;top:420.50px;font-size:12.7px;color:#444;">Kehadiran Periode Cut Off</div>
<svg class="r" style="left:864px;top:424px" width="9" height="8" viewBox="0 0 9 8">
<path d="M0.5 1 H8.5 L4.5 7 Z" fill="#222"/></svg>
<div class="r" style="left:903.2px;top:413.2px;width:250.5px;height:31.1px;background:#fff;border:1px solid #d6d6d6;box-sizing:border-box;border-radius:1px"></div>
<div class="t" style="left:919.6px;top:422.27px;font-size:13.5px;color:#666;">NETT</div>
<svg class="r" style="left:1138px;top:425px" width="12" height="9" viewBox="0 0 12 9">
<path d="M1.5 2 L6 6.5 L10.5 2" fill="none" stroke="#333" stroke-width="1.7"/></svg>
<div class="r" style="left:353px;top:473.9px;width:149.7px;height:30.7px;background:#428bca;border-radius:3px"></div>
<svg class="r" style="left:365.5px;top:484px" width="11" height="11" viewBox="0 0 11 11">
<path d="M5.5 0.5 V10.5 M0.5 5.5 H10.5" stroke="#fff" stroke-width="2.2"/></svg>
<div class="t" style="left:382.6px;top:482.73px;font-size:12.6px;color:#fff;">Tambah Tunjangan</div>
<div class="t" style="left:363.2px;top:525.93px;font-size:12.6px;color:#333;font-weight:bold;">Tunjangan</div>
<div class="t" style="left:633px;top:525.93px;font-size:12.6px;color:#333;font-weight:bold;">Nilai</div>
<div class="r" style="left:363.2px;top:546.4px;width:250.5px;height:32.8px;background:#fff;border:1px solid #d8d8d8;box-sizing:border-box"></div>
<div class="t" style="left:379.3px;top:555.97px;font-size:13.5px;color:#6e6e6e;">Tunjangan jabatan</div>
<svg class="r" style="left:597px;top:557.0px" width="12" height="9" viewBox="0 0 12 9">
<path d="M1.8 2.2 L6 6.3 L10.2 2.2" fill="none" stroke="#3a3a3a" stroke-width="1.5"/></svg>
<div class="r" style="left:633px;top:546.4px;width:250.5px;height:32.8px;background:#fff;border:1px solid #d8d8d8;box-sizing:border-box"></div>
<div class="t" style="left:645.5px;top:556.13px;font-size:12.6px;color:#6e6e6e;">200000,00</div>
<svg class="r" style="left:906px;top:554.5px" width="14" height="16" viewBox="0 0 14 16">
<g fill="#f00000"><path d="M1.4 3.4 C2.5 1.2 5 0.6 7.25 0.6 C9.5 0.6 12 1.2 13.1 3.4 Z"/>
<path d="M2.3 3.9 H12.2 V14 Q12.2 15.3 10.9 15.3 H3.6 Q2.3 15.3 2.3 14 Z"/></g>
<path d="M1.4 3.1 H13.1" stroke="#a00000" stroke-width="0.8"/></svg>
<div class="t" style="left:363.2px;top:591.83px;font-size:12.6px;color:#333;font-weight:bold;">Tunjangan</div>
<div class="t" style="left:633px;top:591.83px;font-size:12.6px;color:#333;font-weight:bold;">Nilai</div>
<div class="r" style="left:363.2px;top:612.3px;width:250.5px;height:32.8px;background:#fff;border:1px solid #d8d8d8;box-sizing:border-box"></div>
<div class="t" style="left:379.3px;top:621.87px;font-size:13.5px;color:#6e6e6e;">Tunjangan Komunikasi</div>
<svg class="r" style="left:597px;top:622.9px" width="12" height="9" viewBox="0 0 12 9">
<path d="M1.8 2.2 L6 6.3 L10.2 2.2" fill="none" stroke="#3a3a3a" stroke-width="1.5"/></svg>
<div class="r" style="left:633px;top:612.3px;width:250.5px;height:32.8px;background:#fff;border:1px solid #d8d8d8;box-sizing:border-box"></div>
<div class="t" style="left:645.5px;top:622.03px;font-size:12.6px;color:#6e6e6e;">300000,00</div>
<svg class="r" style="left:906px;top:620.4px" width="14" height="16" viewBox="0 0 14 16">
<g fill="#f00000"><path d="M1.4 3.4 C2.5 1.2 5 0.6 7.25 0.6 C9.5 0.6 12 1.2 13.1 3.4 Z"/>
<path d="M2.3 3.9 H12.2 V14 Q12.2 15.3 10.9 15.3 H3.6 Q2.3 15.3 2.3 14 Z"/></g>
<path d="M1.4 3.1 H13.1" stroke="#a00000" stroke-width="0.8"/></svg>
<div class="t" style="left:363.2px;top:657.73px;font-size:12.6px;color:#333;font-weight:bold;">Tunjangan</div>
<div class="t" style="left:633px;top:657.73px;font-size:12.6px;color:#333;font-weight:bold;">Nilai</div>
<div class="r" style="left:363.2px;top:678.2px;width:250.5px;height:32.8px;background:#fff;border:1px solid #d8d8d8;box-sizing:border-box"></div>
<div class="t" style="left:379.3px;top:687.77px;font-size:13.5px;color:#6e6e6e;">Tunjangan Makan</div>
<svg class="r" style="left:597px;top:688.8px" width="12" height="9" viewBox="0 0 12 9">
<path d="M1.8 2.2 L6 6.3 L10.2 2.2" fill="none" stroke="#3a3a3a" stroke-width="1.5"/></svg>
<div class="r" style="left:633px;top:678.2px;width:250.5px;height:32.8px;background:#fff;border:1px solid #d8d8d8;box-sizing:border-box"></div>
<div class="t" style="left:645.5px;top:687.93px;font-size:12.6px;color:#6e6e6e;">200000,00</div>
<svg class="r" style="left:906px;top:686.3px" width="14" height="16" viewBox="0 0 14 16">
<g fill="#f00000"><path d="M1.4 3.4 C2.5 1.2 5 0.6 7.25 0.6 C9.5 0.6 12 1.2 13.1 3.4 Z"/>
<path d="M2.3 3.9 H12.2 V14 Q12.2 15.3 10.9 15.3 H3.6 Q2.3 15.3 2.3 14 Z"/></g>
<path d="M1.4 3.1 H13.1" stroke="#a00000" stroke-width="0.8"/></svg>
</div>
</body></html>
